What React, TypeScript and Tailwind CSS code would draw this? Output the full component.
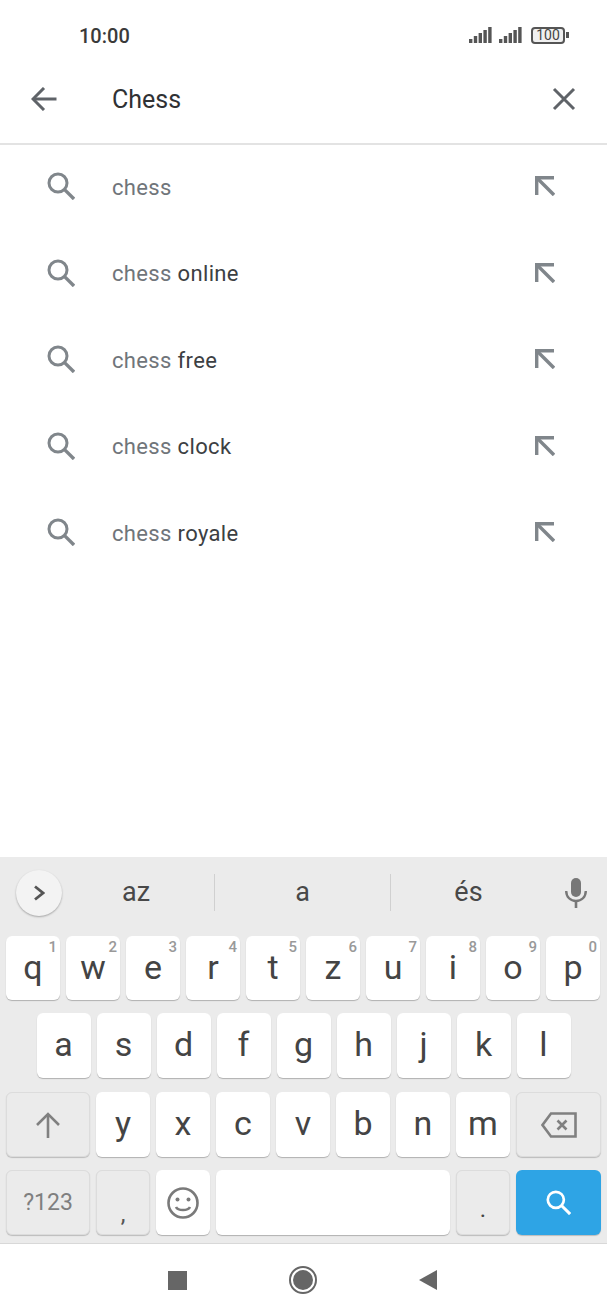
import React from "react";

const FONT = "font-['Roboto',sans-serif]";

function Signal() {
  const bars = [
    [0, 12, 4],
    [4.8, 9, 7],
    [9.6, 6, 10],
    [14.4, 3, 13],
    [19.2, 0, 16],
  ];
  return (
    <svg width="23" height="16" viewBox="0 0 23 16" fill="#555555">
      {bars.map(([x, y, h]) => (
        <rect key={x} x={x} y={y} width="3.4" height={h} />
      ))}
    </svg>
  );
}

function SearchIcon({ color = "#80868b", size = 28, sw = 3 }: { color?: string; size?: number; sw?: number }) {
  return (
    <svg width={size} height={size} viewBox="0 0 28 28" fill="none" stroke={color} strokeWidth={sw}>
      <circle cx="11" cy="11" r="9" />
      <path d="M17.6 17.6L27 27" strokeWidth={sw + 0.4} />
    </svg>
  );
}

function Suggestion({ rest }: { rest?: string }) {
  return (
    <div className="flex h-[86.5px] items-center">
      <div className="ml-[47px] flex w-[65px] shrink-0 pb-[3px]">
        <SearchIcon />
      </div>
      <div className="flex-1 text-[22px] leading-none tracking-[0.35px]">
        <span className="text-[#70757a]">chess</span>
        {rest ? <span className="text-[#3c4043]"> {rest}</span> : null}
      </div>
      <svg className="mb-[3px] mr-[52px]" width="20" height="20" viewBox="0 0 20 20" fill="none" stroke="#80868b" strokeWidth="3.4">
        <path d="M1.7 19V1.7H19" />
        <path d="M2 2L19 19" />
      </svg>
    </div>
  );
}

function Key({ label, hint, h = "h-[65px]" }: { label: string; hint?: string; h?: string }) {
  return (
    <div className={`relative flex ${h} w-[54px] shrink-0 items-center justify-center rounded-[6px] bg-white pb-[3px] text-[34px] leading-none text-[#444444] shadow-[0_1px_1px_rgba(0,0,0,0.25)]`}>
      {label}
      {hint ? (
        <span className="absolute right-[3px] top-[4px] text-[15px] font-medium leading-none text-[#999999]">{hint}</span>
      ) : null}
    </div>
  );
}

function FnKey({ w, children, className = "" }: { w: string; children?: React.ReactNode; className?: string }) {
  return (
    <div className={`flex h-[65px] ${w} shrink-0 items-center justify-center rounded-[6px] border border-[#dcdcdc] bg-[#ebebeb] shadow-[0_1px_1px_rgba(0,0,0,0.2)] ${className}`}>
      {children}
    </div>
  );
}

export default function App() {
  const row1 = [
    ["q", "1"], ["w", "2"], ["e", "3"], ["r", "4"], ["t", "5"],
    ["z", "6"], ["u", "7"], ["i", "8"], ["o", "9"], ["p", "0"],
  ];
  const row2 = ["a", "s", "d", "f", "g", "h", "j", "k", "l"];
  const row3 = ["y", "x", "c", "v", "b", "n", "m"];
  return (
    <div className={`${FONT} flex h-[1316px] w-[607px] flex-col overflow-hidden bg-white`}>
      {/* status bar */}
      <div className="flex h-[70px] shrink-0 items-center justify-between pl-[79px] pr-[38px]">
        <span className="mt-[2px] text-[20px] font-medium leading-none text-[#3a3a3a]">10:00</span>
        <div className="flex items-center">
          <Signal />
          <div className="ml-[7px]"><Signal /></div>
          <div className="ml-[9px] flex h-[17px] w-[34px] items-center justify-center rounded-[4px] border-2 border-[#555555] bg-[#f0f0f0] text-[14px] leading-none text-[#444444]">100</div>
          <div className="ml-[1px] h-[6px] w-[3px] bg-[#555555]" />
        </div>
      </div>

      {/* search bar */}
      <div className="flex h-[74.5px] shrink-0 items-center border-b-2 border-[#e3e3e3] pb-[14px]">
        <svg className="ml-[31px]" width="26" height="24" viewBox="0 0 26 24" fill="none" stroke="#5f6368" strokeWidth="3">
          <path d="M25.5 12H2.5" />
          <path d="M13 1L2 12L13 23" />
        </svg>
        <div className="ml-[55px] flex-1 text-[25px] leading-none text-[#303134]">Chess</div>
        <svg className="mr-[31px]" width="24" height="24" viewBox="0 0 24 24" fill="none" stroke="#5f6368" strokeWidth="3">
          <path d="M2 2L22 22M22 2L2 22" />
        </svg>
      </div>

      {/* suggestions */}
      <div>
        <Suggestion />
        <Suggestion rest="online" />
        <Suggestion rest="free" />
        <Suggestion rest="clock" />
        <Suggestion rest="royale" />
      </div>

      <div className="flex-1" />

      {/* keyboard */}
      <div className="flex h-[387px] shrink-0 flex-col border-b border-[#d8d8d8] bg-[#ebebeb]">
        <div className="flex h-[79px] shrink-0 items-center pb-[8px]">
          <div className="ml-[16px] flex h-[46px] w-[46px] shrink-0 items-center justify-center rounded-full bg-[#f3f3f3] shadow-[0_1px_2px_rgba(0,0,0,0.3)]">
            <svg width="12" height="16" viewBox="0 0 12 16" fill="none" stroke="#555555" strokeWidth="2.8">
              <path d="M2 1.5L10 8L2 14.5" />
            </svg>
          </div>
          <div className="w-[152px] pr-[4px] text-center text-[27px] leading-none text-[#484848]">az</div>
          <div className="h-[37px] w-px bg-[#d0d0d0]" />
          <div className="w-[175px] text-center text-[27px] leading-none text-[#484848]">a</div>
          <div className="h-[37px] w-px bg-[#d0d0d0]" />
          <div className="w-[155px] text-center text-[27px] leading-none text-[#484848]">és</div>
          <svg className="ml-[19px]" width="22" height="30" viewBox="0 0 22 30" fill="none">
            <rect x="6" y="0" width="10" height="19" rx="5" fill="#777777" />
            <path d="M1.2 13C1.2 19 5.5 23 11 23C16.5 23 20.8 19 20.8 13" stroke="#777777" strokeWidth="2.4" />
            <path d="M11 23V30" stroke="#777777" strokeWidth="2.6" />
          </svg>
        </div>

        <div className="flex flex-col gap-[13px]">
          <div className="flex gap-[6px] pl-[6px]">
            {row1.map(([l, h]) => <Key key={l} label={l} hint={h} h="h-[64px]" />)}
          </div>
          <div className="mb-[1px] flex gap-[6px] pl-[36.5px]">
            {row2.map((l) => <Key key={l} label={l} />)}
          </div>
          <div className="flex gap-[6px] pl-[6px]">
            <FnKey w="w-[84px]">
              <svg width="24" height="26" viewBox="0 0 24 26" fill="none" stroke="#808080" strokeWidth="2.6">
                <path d="M12 26V2" />
                <path d="M1 13L12 2L23 13" />
              </svg>
            </FnKey>
            {row3.map((l) => <Key key={l} label={l} />)}
            <FnKey w="w-[85px]">
              <svg width="36" height="26" viewBox="0 0 36 26" fill="none" stroke="#808080" strokeWidth="2.6">
                <path d="M10 1.5H34.5V24.5H10L1.5 13Z" />
                <path d="M16.5 8.5L25.5 17.5M25.5 8.5L16.5 17.5" />
              </svg>
            </FnKey>
          </div>
          <div className="flex gap-[6px] pl-[6px]">
            <FnKey w="w-[84px]" className="text-[23px] leading-none text-[#7f7f7f]">?123</FnKey>
            <FnKey w="w-[54px]" className="items-end pb-[8px] text-[24px] leading-none text-[#555555]">,</FnKey>
            <div className="flex h-[65px] w-[54px] shrink-0 items-center justify-center rounded-[6px] bg-white shadow-[0_1px_1px_rgba(0,0,0,0.25)]">
              <svg width="32" height="32" viewBox="0 0 32 32" fill="none" stroke="#7a7a7a" strokeWidth="2.6">
                <circle cx="16" cy="16" r="14.5" />
                <circle cx="10.5" cy="12.5" r="2" fill="#7a7a7a" stroke="none" />
                <circle cx="21.5" cy="12.5" r="2" fill="#7a7a7a" stroke="none" />
                <path d="M9 20C11 24 21 24 23 20" />
              </svg>
            </div>
            <div className="h-[65px] w-[234px] shrink-0 rounded-[6px] bg-white shadow-[0_1px_1px_rgba(0,0,0,0.25)]" />
            <FnKey w="w-[54px]" className="items-end pb-[13px] text-[24px] leading-none text-[#444444]">.</FnKey>
            <div className="flex h-[65px] w-[85px] shrink-0 items-center justify-center rounded-[6px] bg-[#2ea4e5] shadow-[0_1px_1px_rgba(0,0,0,0.2)]">
              <SearchIcon color="#ffffff" size={25} sw={3} />
            </div>
          </div>
        </div>
      </div>

      {/* nav bar */}
      <div className="flex h-[72px] shrink-0 items-center">
        <div className="ml-[168px] h-[19px] w-[19px] bg-[#666666]" />
        <div className="ml-[102px] flex h-[28px] w-[28px] items-center justify-center rounded-full border-2 border-[#666666]">
          <div className="h-[20px] w-[20px] rounded-full bg-[#666666]" />
        </div>
        <svg className="ml-[102px]" width="18" height="20" viewBox="0 0 18 20" fill="#666666">
          <path d="M0 10L18 0V20Z" />
        </svg>
      </div>
    </div>
  );
}
